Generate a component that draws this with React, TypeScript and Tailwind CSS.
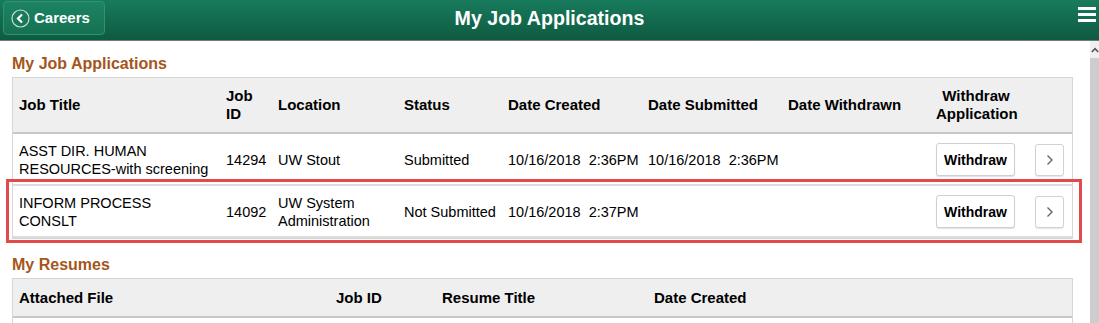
import React from "react";

const jobCols = "grid grid-cols-[207px_52px_126px_104px_140px_140px_148px_99px_43px]";
const resumeCols = "grid grid-cols-[317px_106px_212px_424px]";

type JobRow = {
  title: React.ReactNode;
  id: string;
  location: React.ReactNode;
  status: string;
  created: string;
  submitted: string;
  height: string;
  marked?: boolean;
};

const rows: JobRow[] = [
  {
    title: (
      <>
        ASST DIR. HUMAN
        <br />
        RESOURCES-with screening
      </>
    ),
    id: "14294",
    location: "UW Stout",
    status: "Submitted",
    created: "10/16/2018  2:36PM",
    submitted: "10/16/2018  2:36PM",
    height: "h-[52px] pt-[1px]",
  },
  {
    title: (
      <>
        INFORM PROCESS
        <br />
        CONSLT
      </>
    ),
    id: "14092",
    location: (
      <>
        UW System
        <br />
        Administration
      </>
    ),
    status: "Not Submitted",
    created: "10/16/2018  2:37PM",
    submitted: "",
    height: "h-[52px] pt-[1px]",
    marked: true,
  },
];

const App = () => {
  return (
    <div className="w-[1099px] h-[323px] overflow-hidden bg-white font-['Liberation_Sans',Arial,sans-serif] text-black">
      <header className="relative h-[41px] border-b border-[#777] bg-linear-to-b from-[#187b5d] to-[#0e5a40] flex items-center">
        <button className="ml-[3px] mb-[4px] h-[34px] w-[102px] flex items-center gap-[4px] pl-[7px] rounded-[4px] border border-[#2f9373] bg-linear-to-b from-[#1c8363] to-[#157252] text-white font-bold text-[15px]">
          <svg width="19" height="19" viewBox="0 0 19 19">
            <circle cx="9.5" cy="9.5" r="8.5" fill="none" stroke="#c9ddd4" strokeWidth="1.2" />
            <path d="M11 5.5 L7 9.5 L11 13.5" fill="none" stroke="white" strokeWidth="2.2" />
          </svg>
          Careers
        </button>
        <h1 className="flex-1 text-center text-white font-bold text-[19.6px] mr-[105px] mb-[2px]">
          My Job Applications
        </h1>
        <div className="absolute right-[3px] top-[7px] flex flex-col gap-[3px]">
          <span className="block w-[18px] h-[3px] bg-white" />
          <span className="block w-[18px] h-[3px] bg-white" />
          <span className="block w-[18px] h-[3px] bg-white" />
        </div>
      </header>

      <div className="flex h-[282px]">
        <main className="flex-1 pl-[12px] pr-[17px]">
          <h2 className="pt-[13px] mb-[3px] text-[16px] leading-[20px] font-bold text-[#a5561b]">
            My Job Applications
          </h2>
          <div className="border border-[#d6d6d6] text-[14.5px] leading-[18px]">
            <div className={`${jobCols} h-[56px] items-center bg-[#efefef] border-b-2 border-[#c8c8c8] font-bold text-[15px]`}>
              <div className="pl-[6px]">Job Title</div>
              <div className="pl-[6px]">
                Job
                <br />
                ID
              </div>
              <div className="pl-[6px]">Location</div>
              <div className="pl-[6px]">Status</div>
              <div className="pl-[6px]">Date Created</div>
              <div className="pl-[6px]">Date Submitted</div>
              <div className="pl-[6px]">Date Withdrawn</div>
              <div className="pl-[6px]">
                <div className="w-[80px] text-center">
                  Withdraw
                  <br />
                  Application
                </div>
              </div>
              <div />
            </div>
            {rows.map((row, index) => (
              <div
                key={index}
                className={`${jobCols} ${row.height} relative items-center border-b-2 border-[#dcdcdc]`}
              >
                <div className="pl-[6px]">{row.title}</div>
                <div className="pl-[6px]">{row.id}</div>
                <div className="pl-[6px]">{row.location}</div>
                <div className="pl-[6px]">{row.status}</div>
                <div className="pl-[6px] whitespace-pre">{row.created}</div>
                <div className="pl-[6px] whitespace-pre">{row.submitted}</div>
                <div />
                <div className="pl-[6px]">
                  <button className="w-[79px] h-[33px] rounded-[3px] border border-[#cfcfcf] bg-white shadow-[0_1px_1px_rgba(0,0,0,0.12)] font-bold text-[14px]">
                    Withdraw
                  </button>
                </div>
                <div className="pl-[6px]">
                  <button className="w-[29px] h-[32px] rounded-[3px] border border-[#d2d2d2] bg-white shadow-[0_1px_1px_rgba(0,0,0,0.1)] flex items-center justify-center">
                    <svg width="8" height="12" viewBox="0 0 8 12">
                      <path d="M1.5 1.5 L6 6 L1.5 10.5" fill="none" stroke="#666" strokeWidth="1.4" />
                    </svg>
                  </button>
                </div>
                {row.marked && (
                  <span className="absolute -left-[7px] -right-[10px] -top-[7px] -bottom-[7px] border-[3px] border-[#e24a4a] pointer-events-none" />
                )}
              </div>
            ))}
          </div>

          <h2 className="mt-[16px] mb-[3px] text-[16px] leading-[20px] font-bold text-[#a5561b]">
            My Resumes
          </h2>
          <div className="border border-[#d6d6d6] text-[14.5px] leading-[18px]">
            <div className={`${resumeCols} h-[39px] items-center bg-[#efefef] border-b-2 border-[#c8c8c8] font-bold text-[15px]`}>
              <div className="pl-[6px]">Attached File</div>
              <div className="pl-[6px]">Job ID</div>
              <div className="pl-[6px]">Resume Title</div>
              <div className="pl-[6px]">Date Created</div>
            </div>
            <div className="h-[40px]" />
          </div>
        </main>

        <div className="w-[11px] flex flex-col bg-[#cdcdcd]">
          <div className="h-[17px] bg-[#f0f0f0] flex items-center justify-center">
            <svg width="8" height="6" viewBox="0 0 8 6">
              <path d="M0.8 5 L4 1.6 L7.2 5" fill="none" stroke="#555" strokeWidth="1.6" />
            </svg>
          </div>
        </div>
      </div>
    </div>
  );
};

export default App;
